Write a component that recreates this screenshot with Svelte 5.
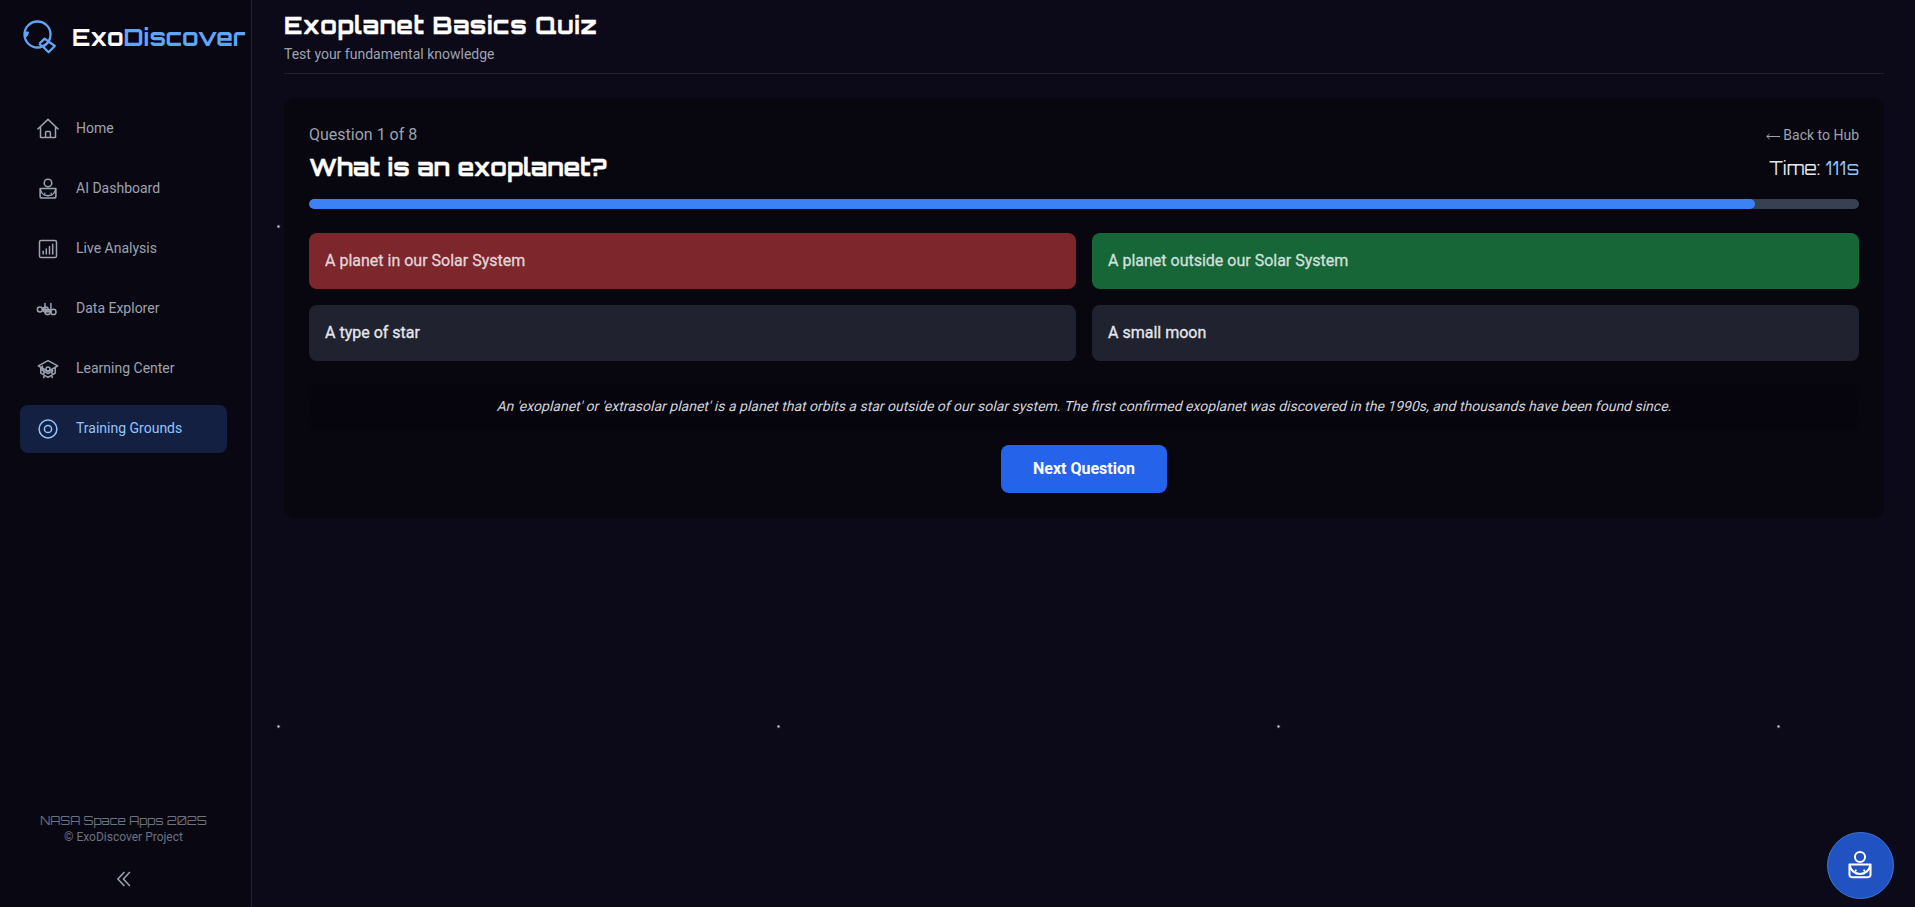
<script>
  const nav = [
    { id: 'home', label: 'Home' },
    { id: 'ai', label: 'AI Dashboard' },
    { id: 'live', label: 'Live Analysis' },
    { id: 'data', label: 'Data Explorer' },
    { id: 'learn', label: 'Learning Center' },
    { id: 'train', label: 'Training Grounds' }
  ];
  const answers = [
    { text: 'A planet in our Solar System', state: 'wrong' },
    { text: 'A planet outside our Solar System', state: 'right' },
    { text: 'A type of star', state: '' },
    { text: 'A small moon', state: '' }
  ];
  let active = $state('train');
  let progress = $state(93.3);
</script>

{#snippet icon(id, size)}
  <svg width={size} height={size} viewBox="0 0 24 24" fill="none" stroke="currentColor" stroke-width="1.5" stroke-linecap="round" stroke-linejoin="round">
    {#if id === 'home'}
      <path d="M1.9 12 12 2.4 22.1 12M4.5 9.8v10.8h15V9.8M9.6 20.6v-5.2q0-.8.8-.8h3.2q.8 0 .8.8v5.2" />
    {:else if id === 'ai'}
      <circle cx="12" cy="6" r="3.8" />
      <path d="M4.1 11.6h15.8v7.6q0 1.9-1.9 1.9H6q-1.9 0-1.9-1.9zM4.3 11.8c1 9.2 14.4 9.2 15.4 0M8.8 16.2h.1M15.1 16.2h.1" />
    {:else if id === 'live'}
      <rect x="3.5" y="3.5" width="17" height="17" rx="1.6" />
      <path d="M7.2 14.2v2.7M10.3 12v4.9M13.5 9.6v7.3M16.7 7.2v9.7" />
    {:else if id === 'data'}
      <circle cx="3.9" cy="12.6" r="2.5" /><circle cx="9.7" cy="12.6" r="2.5" />
      <circle cx="11.6" cy="14.9" r="2.6" /><circle cx="17.4" cy="14.9" r="2.6" />
      <path d="M9 6.6v6M14.9 6.6v8.3M6.4 12.6h2.2l3.2 2.2h3" />
    {:else if id === 'learn'}
      <path d="M2.3 8.8 12 3.7l9.7 5.1-9.7 5.7zM4.8 10v6.2l7.2 4.2 7.2-4.2V10M6.4 8.9v4.4l5.6 3.3 4.8-2.7M7.9 14.2v6.5M16.1 12.5v8" />
      <circle cx="12" cy="12" r="2" />
    {:else}
      <circle cx="12" cy="12" r="8.9" /><circle cx="12" cy="12" r="3.6" />
    {/if}
  </svg>
{/snippet}

<div class="app">
  <aside>
    <div class="brand">
      <svg width="38" height="38" viewBox="22 18 38 38" fill="none" stroke="#60a5fa" stroke-width="2.3" stroke-linejoin="round">
        <circle cx="37.5" cy="34.5" r="13" />
        <path d="M24.5 32h4q-.5 4.5-3 5.5z" fill="#60a5fa" stroke-width="1" />
        <path d="M39.3 43.8 44.6 38.6l10.2 7.4-6.2 6.3-5.3-5.3 5.8-5.8M39.3 43.8q2 3 5.5 1.6" />
      </svg>
      <div class="name">Exo<span>Discover</span></div>
    </div>
    <nav>
      {#each nav as n}
        <button class="item" class:active={active === n.id} onclick={() => (active = n.id)}>
          {@render icon(n.id, 24)}<span>{n.label}</span>
        </button>
      {/each}
    </nav>
    <footer>
      <p class="nasa">NASA Space Apps 2025</p>
      <p>© ExoDiscover Project</p>
      <svg class="fold" width="24" height="24" viewBox="0 0 24 24" fill="none" stroke="#9ca3af" stroke-width="1.5"><path d="m12.4 5-6.5 7 6.5 7M17.9 5l-6.5 7 6.5 7" /></svg>
    </footer>
  </aside>

  <main>
    <header>
      <h1>Exoplanet Basics Quiz</h1>
      <p>Test your fundamental knowledge</p>
    </header>
    <section class="card">
      <div class="top">
        <div>
          <p class="count">Question 1 of 8</p>
          <h2>What is an exoplanet?</h2>
        </div>
        <div class="side">
          <button class="back"><svg width="14" height="10" viewBox="0 0 14 10" fill="none" stroke="currentColor"><path d="M.8 4.5H14M3.6 2 .8 4.5 3.6 7" /></svg>Back to Hub</button>
          <div class="time">Time: <span>111s</span></div>
        </div>
      </div>
      <div class="bar"><div style:width="{progress}%"></div></div>
      <div class="answers">
        {#each answers as a}<button class={a.state}>{a.text}</button>{/each}
      </div>
      <div class="why"><p>An 'exoplanet' or 'extrasolar planet' is a planet that orbits a star outside of our solar system. The first confirmed exoplanet was discovered in the 1990s, and thousands have been found since.</p></div>
      <button class="next">Next Question</button>
    </section>
  </main>
  <button class="fab" aria-label="AI assistant">{@render icon('ai', 32)}</button>
</div>

<style>
  :global(body) { margin: 0; background: #0c0918; }
  * { box-sizing: border-box; }
  p, h1, h2 { margin: 0; }
  button { font: inherit; border: 0; color: inherit; cursor: pointer; }
  svg { display: block; flex: none; }
  h1, h2, .name, .time, .nasa { font-family: Orbitron, Inter, sans-serif; white-space: nowrap; }
  h1, h2, .name { font-size: 24px; line-height: 32px; font-weight: 700; color: #fff; }
  h1 { letter-spacing: 0.6px; }
  h1, h2 { -webkit-text-stroke: 0.3px currentColor; }
  .app { display: flex; height: 907px; overflow: hidden; font-family: Roboto, sans-serif; color: #e5e7eb; background: #0c0918; }
  aside { width: 252px; flex: none; display: flex; flex-direction: column; background: #090712; border-right: 1px solid #24222e; }
  .brand { display: flex; align-items: flex-start; padding: 18px 0 0 22px; gap: 12px; height: 105px; }
  .name { padding-top: 3px; }
  .name span { color: #60a5fa; }
  nav { display: flex; flex-direction: column; gap: 12px; padding: 0 24px 0 20px; flex: 1; }
  .item { display: flex; align-items: center; gap: 16px; height: 48px; padding: 0 16px; border-radius: 8px; background: none; color: #9ca3af; font-size: 14px; line-height: 20px; text-align: left; }
  .item span { padding-bottom: 2px; }
  .item.active { background: #142042; color: #93c5fd; }
  footer { display: flex; flex-direction: column; align-items: center; padding: 0 24px 16px 20px; font-size: 12px; line-height: 16px; color: #6b7280; }
  .fold { margin-top: 22px; }
  main { flex: 1; padding: 9px 31px 0 32px; background: radial-gradient(circle at center, #d8d2ec 0, #d8d2ec 0.7px, transparent 1.7px) -223.5px -23.5px / 500px 500px; }
  header { border-bottom: 1px solid #24212f; padding-bottom: 9px; }
  header p { margin-top: 3px; font-size: 14px; line-height: 20px; color: #9ca3af; }
  .card { margin-top: 24px; height: 420px; padding: 25px; border-radius: 12px; background: #08060f; }
  .top { display: flex; justify-content: space-between; height: 76px; }
  .count { font-size: 16px; line-height: 24px; margin-bottom: 4px; color: #9ca3af; }
  .side { display: flex; flex-direction: column; align-items: flex-end; }
  .back { display: flex; align-items: center; gap: 3px; padding: 0; margin: 2px 0 9px; height: 20px; background: none; color: #9ca3af; font-size: 14px; line-height: 20px; }
  .back svg { margin-top: 3px; }
  .time { font-size: 18px; line-height: 28px; }
  .time span { color: #93c5fd; }
  .bar { height: 10px; border-radius: 5px; background: #374151; overflow: hidden; }
  .bar div { height: 100%; border-radius: 5px; background: #3b82f6; }
  .answers { display: grid; grid-template-columns: 1fr 1fr; gap: 16px; margin-top: 24px; }
  .answers button { height: 56px; padding: 0 16px 2px; border-radius: 8px; background: #202230; color: #e5e7eb; text-align: left; font-size: 16px; font-weight: 400; -webkit-text-stroke: 0.3px currentColor; }
  .answers .wrong { background: #7d262c; color: #e2d4d9; }
  .answers .right { background: #166638; color: #d0e0da; }
  .why { height: 44px; margin-top: 24px; line-height: 43px; font-size: 14px; text-align: center; color: #d1d5db; background: #06040d; border-radius: 8px; }
  .why p { padding-left: 2px; transform: skewX(-14deg); }
  .next { display: block; width: 166px; height: 48px; margin: 16px auto 0; padding: 0 0 2px; border-radius: 8px; background: #2563eb; color: #fff; font-size: 16px; font-weight: 700; }
  .fab { position: fixed; right: 21.5px; bottom: 8.5px; width: 67px; height: 67px; padding: 0; display: grid; place-items: center; border-radius: 50%; background: #2052c1; border: 1px solid #3b76dc; color: #fff; }
</style>
